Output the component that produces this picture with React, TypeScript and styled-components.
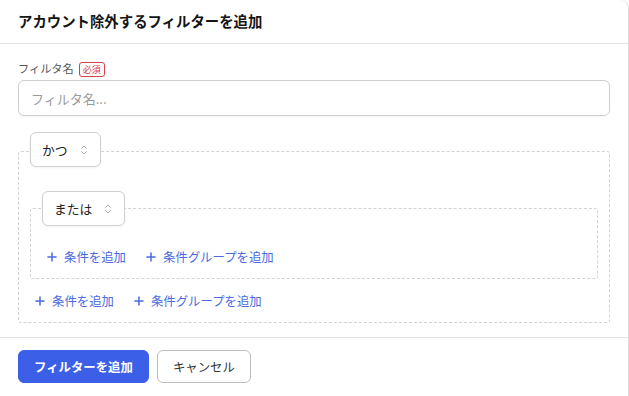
import React from 'react';
import styled, { createGlobalStyle } from 'styled-components';
import { Plus, ChevronsUpDown } from 'lucide-react';

const GlobalStyle = createGlobalStyle`
  html, body {
    margin: 0;
    padding: 0;
    background: #fff;
  }
  body {
    font-family: 'Noto Sans CJK JP', 'Noto Sans', sans-serif;
    color: #222;
  }
`;

const Card = styled.div`
  width: 629px;
  height: 396px;
  box-sizing: border-box;
  border-right: 1px solid #dcdcdc;
  border-top-right-radius: 8px;
  background: #fff;
  overflow: hidden;
`;

const Header = styled.div`
  height: 44px;
  box-sizing: border-box;
  display: flex;
  align-items: center;
  padding: 0 18px;
  border-bottom: 1px solid #e4e4e4;
`;

const Title = styled.h2`
  margin: 0;
  font-size: 14.4px;
  font-weight: 700;
  color: #151515;
  line-height: 1;
`;

const Body = styled.div`
  padding: 17px 18px 14px;
  display: flex;
  flex-direction: column;
`;

const LabelRow = styled.div`
  display: flex;
  align-items: center;
  gap: 5px;
  height: 16px;
`;

const Label = styled.label`
  font-size: 11.2px;
  color: #555;
  line-height: 1;
`;

const Badge = styled.span`
  display: inline-flex;
  align-items: center;
  justify-content: center;
  height: 13px;
  padding: 0 3px;
  border: 1px solid #d6404a;
  border-radius: 3px;
  color: #d6404a;
  font-size: 9px;
  line-height: 1;
`;

const Input = styled.input`
  margin-top: 3px;
  height: 36px;
  box-sizing: border-box;
  width: 100%;
  border: 1px solid #cfcfcf;
  border-radius: 6px;
  padding: 0 12px;
  font-family: inherit;
  font-size: 13px;
  color: #222;
  box-shadow: 0 1px 2px rgba(0, 0, 0, 0.04);
  outline: none;

  &::placeholder {
    color: #9a9a9a;
  }
`;

const Group = styled.div<{ $nested?: boolean }>`
  margin-top: ${(p) => (p.$nested ? '41px' : '35px')};
  border: 1px dashed #d2d2d2;
  border-radius: 3px;
  padding: 0 11px 11px;
  display: flex;
  flex-direction: column;
  align-items: stretch;
`;

const SelectButton = styled.button<{ $lift: number }>`
  align-self: flex-start;
  margin-top: ${(p) => -p.$lift}px;
  height: 35px;
  display: inline-flex;
  align-items: center;
  gap: 10px;
  padding: 0 10px 0 11px;
  background: #fff;
  border: 1px solid #d0d0d0;
  border-radius: 6px;
  box-shadow: 0 1px 3px rgba(0, 0, 0, 0.05);
  font-family: inherit;
  font-size: 12.8px;
  color: #222;
  cursor: pointer;

  svg {
    color: #9a9a9a;
  }
`;

const Actions = styled.div<{ $nested?: boolean }>`
  margin-top: ${(p) => (p.$nested ? '21px' : '12px')};
  height: 20px;
  display: flex;
  align-items: center;
  gap: 18px;
  padding-left: 3px;
`;

const LinkButton = styled.button`
  display: inline-flex;
  align-items: center;
  gap: 5px;
  padding: 0;
  border: none;
  background: none;
  font-family: inherit;
  font-size: 12.4px;
  color: #4a6be0;
  cursor: pointer;
`;

const Footer = styled.div`
  border-top: 1px solid #e4e4e4;
  padding: 12px 18px;
  display: flex;
  gap: 8px;
`;

const Button = styled.button<{ $primary?: boolean }>`
  height: 33px;
  box-sizing: border-box;
  padding: 0 15px;
  border-radius: 6px;
  font-family: inherit;
  font-size: 12.4px;
  font-weight: ${(p) => (p.$primary ? 700 : 400)};
  color: ${(p) => (p.$primary ? '#fff' : '#333')};
  background: ${(p) => (p.$primary ? '#3b5fe6' : '#fff')};
  border: 1px solid ${(p) => (p.$primary ? '#3b5fe6' : '#bdbdbd')};
  cursor: pointer;
`;

function Select({ value, lift }: { value: string; lift: number }) {
  return (
    <SelectButton $lift={lift}>
      {value}
      <ChevronsUpDown size={12} strokeWidth={1.6} />
    </SelectButton>
  );
}

function AddActions({ nested }: { nested?: boolean }) {
  return (
    <Actions $nested={nested}>
      <LinkButton>
        <Plus size={14} strokeWidth={2.6} />
        条件を追加
      </LinkButton>
      <LinkButton>
        <Plus size={14} strokeWidth={2.6} />
        条件グループを追加
      </LinkButton>
    </Actions>
  );
}

export default function App() {
  return (
    <>
      <GlobalStyle />
      <Card>
        <Header>
          <Title>アカウント除外するフィルターを追加</Title>
        </Header>
        <Body>
          <LabelRow>
            <Label>フィルタ名</Label>
            <Badge>必須</Badge>
          </LabelRow>
          <Input placeholder="フィルタ名..." />
          <Group>
            <Select value="かつ" lift={20} />
            <Group $nested>
              <Select value="または" lift={18} />
              <AddActions nested />
            </Group>
            <AddActions />
          </Group>
        </Body>
        <Footer>
          <Button $primary>フィルターを追加</Button>
          <Button>キャンセル</Button>
        </Footer>
      </Card>
    </>
  );
}
